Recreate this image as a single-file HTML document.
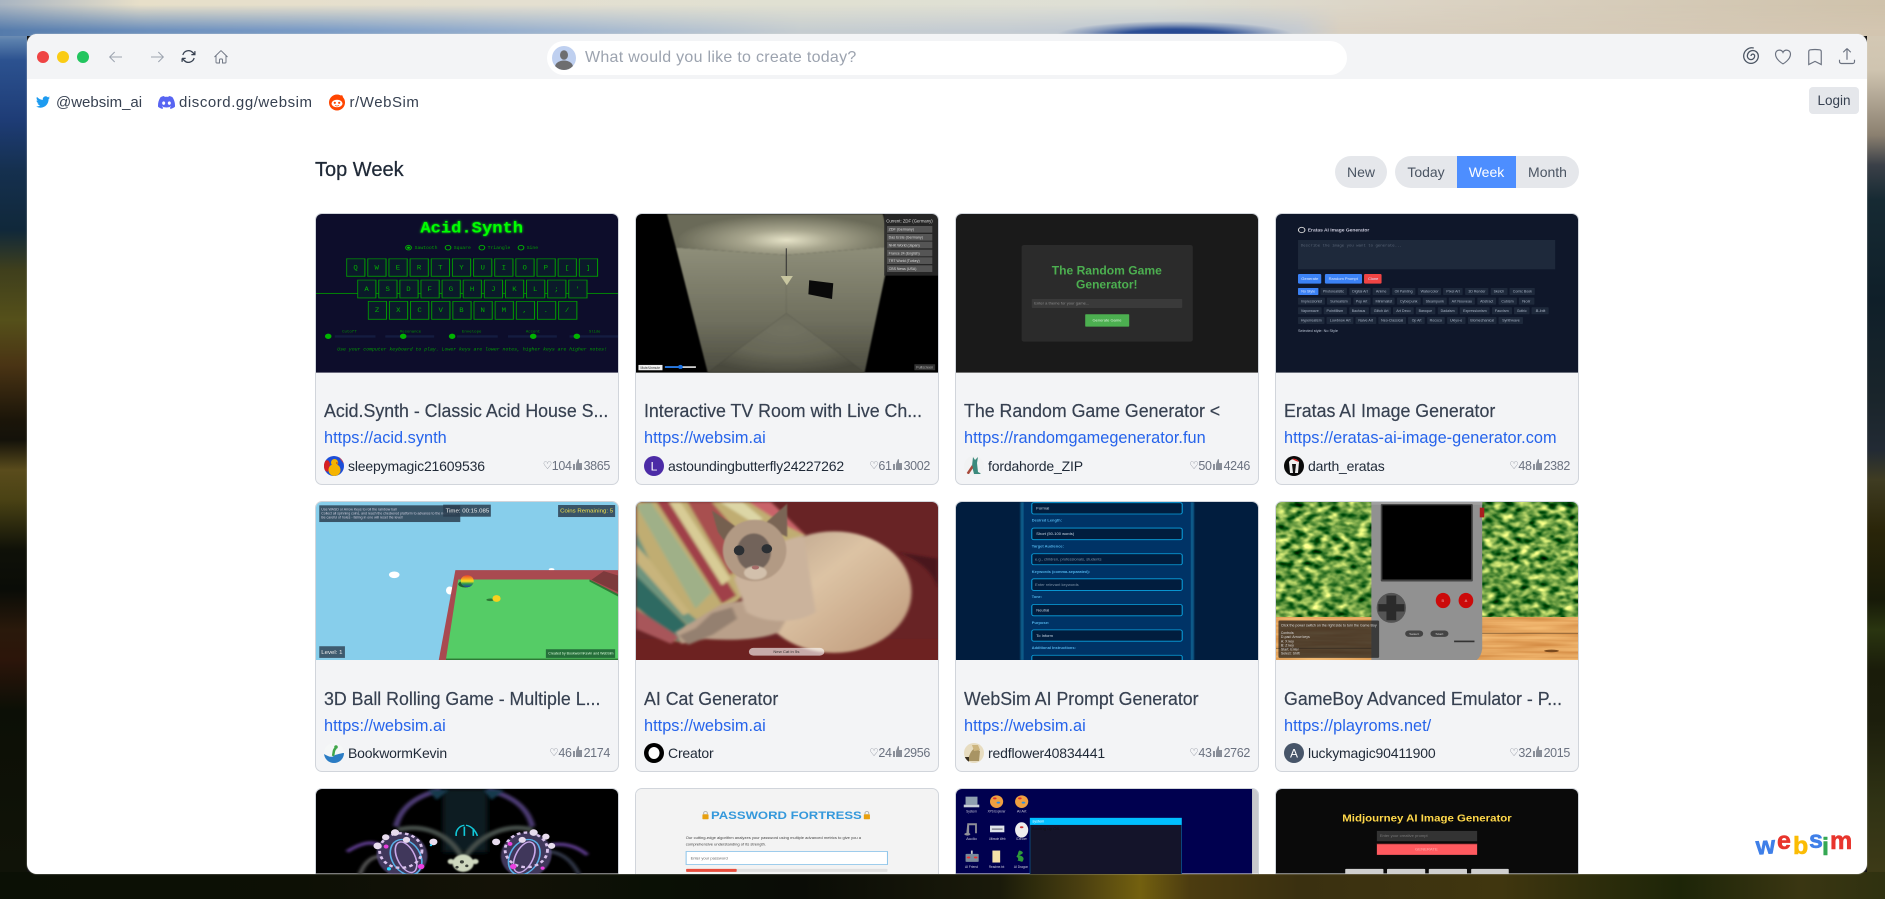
<!DOCTYPE html>
<html lang="en"><head><meta charset="utf-8"><title>websim</title>
<style>
html,body{margin:0;padding:0;width:1885px;height:899px;overflow:hidden;background:#111;font-family:"Liberation Sans",sans-serif}
.bg{position:absolute}
#bgL{left:0;top:0;width:27px;height:899px;background:linear-gradient(180deg,#cfcdc4 0,#9db0c4 25px,#5b80ad 40px,#2c5290 60px,#1e3c76 120px,#15304f 170px,#10283a 230px,#3f3f1c 270px,#55501a 320px,#4a3414 365px,#1b1509 420px,#14120a 440px,#5a4c1c 470px,#4a4214 500px,#0f1108 550px,#0a0c07 590px,#2a190b 630px,#2c150a 660px,#0c0f06 710px,#111408 899px)}
#bgR{left:1867px;top:0;width:18px;height:899px;background:linear-gradient(180deg,#d8ccb8 0,#cfc4b0 70px,#8b8070 135px,#3b4048 165px,#162a33 200px,#0f1f29 300px,#1a252b 400px,#222a34 450px,#3f3c22 480px,#2a2509 530px,#171a08 600px,#2a3510 630px,#1a1c0a 670px,#1c1e0c 720px,#2f3214 800px,#3d3a17 870px,#2a2a0d 899px)}
#bgT{left:0;top:0;width:1885px;height:36px;background:linear-gradient(90deg,#a9b5c2 0,#e7dfc9 140px,#e4dfd0 500px,#e0e0d2 800px,#dedfd5 1150px,#dcd4c5 1400px,#cfc2ab 1885px)}
#bgT2{left:0;top:0;width:1885px;height:36px;background:linear-gradient(90deg,#557bab 0,#6d90bd 150px,#7b9cc6 320px,#9eb4cf 550px,#c5ccd0 800px,#c4cbd2 1000px,#b9c4d2 1240px,#c5cad0 1300px,#d8cfc0 1340px,#d3c5b0 1885px);-webkit-mask-image:linear-gradient(180deg,transparent 5px,#000 30px);mask-image:linear-gradient(180deg,transparent 5px,#000 30px)}
#bgT3{left:1040px;top:18px;width:270px;height:18px;background:radial-gradient(ellipse 120px 15px at 50% 100%,#1f3f8f 0,#2d4f95 45%,rgba(70,100,160,.45) 75%,rgba(120,140,180,0) 100%)}
#bgB{left:0;top:872px;width:1885px;height:27px;background:linear-gradient(90deg,#0b1005 0,#0d1005 300px,#141207 500px,#0a1005 650px,#0a0c06 800px,#1a1a0a 1000px,#2c2a0c 1030px,#4a3f10 1080px,#73600f 1140px,#4c3c10 1190px,#3a3010 1300px,#40360f 1500px,#1d2508 1680px,#3a3612 1800px,#2f3110 1885px)}
#win{position:absolute;left:27px;top:34px;width:1840px;height:840px;background:#fff;border-radius:10px;overflow:hidden;box-shadow:0 0 1.5px rgba(225,225,215,.8)}
#bar{position:absolute;left:0;top:0;width:100%;height:45px;background:#f3f4f6}
.dot{position:absolute;top:17px;width:12px;height:12px;border-radius:50%}
.ic{position:absolute;fill:none}
#search{position:absolute;left:520px;top:7px;width:800px;height:34px;border-radius:17px;background:#fff}
#search span{position:absolute;left:38px;top:7px;font-size:16px;line-height:20px;color:#9ca3af;letter-spacing:.28px;white-space:nowrap}
.lnk{position:absolute;top:60px;font-size:15px;line-height:18px;color:#374151;white-space:nowrap}
#login{position:absolute;left:1782px;top:53px;width:50px;height:27px;background:#e5e7eb;border-radius:4px;text-align:center;font-size:13.5px;line-height:27px;color:#374151}
h1{position:absolute;margin:0;left:288px;top:124px;font-size:20px;line-height:24px;font-weight:500;color:#1f2937;white-space:nowrap;-webkit-text-stroke:.25px #1f2937}
.tab{position:absolute;top:122px;height:32px;line-height:32px;text-align:center;font-size:14px;color:#4b5563;background:#e5e7eb}
#grid{position:absolute;left:288px;top:179.3px;height:660.7px;overflow:hidden;display:grid;grid-template-columns:repeat(4,304px);column-gap:16px;row-gap:16px}
.card{position:relative;width:302px;height:269.6px;background:#f3f4f6;border:1px solid #d1d5db;border-radius:7px;overflow:hidden}
.card.r3{height:84.5px;border-bottom:0;border-radius:7px 7px 0 0}
.t{display:block;width:302px;height:158.6px;filter:blur(.25px)}
.r3 .t{height:84.5px}
.ti{position:absolute;left:8px;top:185px;font-size:18.5px;line-height:24px;color:#374151;white-space:nowrap;-webkit-text-stroke:.2px #374151;transform:scaleX(.96);transform-origin:0 50%}
.u{position:absolute;left:8px;top:214px;font-size:16.3px;line-height:20px;color:#2563eb;white-space:nowrap;letter-spacing:.03px}
.av{position:absolute;left:8px;top:241.5px;width:20px;height:20px;border-radius:50%;overflow:hidden}
.n{position:absolute;left:32px;top:241.5px;font-size:14px;line-height:20px;color:#1f2937;white-space:nowrap;letter-spacing:-.17px}
.s{position:absolute;right:8px;top:241.5px;height:20px;display:flex;align-items:center;font-size:12.5px;color:#6b7280;letter-spacing:-.35px;white-space:nowrap}
.s i{font-style:normal;font-family:"DejaVu Sans",sans-serif;font-size:10.5px}
.s svg{margin:-3px 2px 0 1px}
svg text{font-family:"Liberation Sans",sans-serif}
svg .m{font-family:"Liberation Mono",monospace}
#logo{position:absolute;left:1728px;top:795px;width:98px;height:32px}
</style></head><body>
<div class="bg" id="bgL"></div><div class="bg" id="bgR"></div><div class="bg" id="bgT"></div><div class="bg" id="bgT2"></div><div class="bg" id="bgT3"></div><div class="bg" id="bgB"></div>
<svg width="0" height="0" style="position:absolute"><defs>
<filter id="b2" x="-20%" y="-20%" width="140%" height="140%"><feGaussianBlur stdDeviation="2"/></filter>
<filter id="b4" x="-30%" y="-30%" width="160%" height="160%"><feGaussianBlur stdDeviation="4"/></filter>
<filter id="b7" x="-5%" y="-5%" width="110%" height="110%"><feGaussianBlur stdDeviation="7"/></filter>
<filter id="glow" x="-30%" y="-50%" width="160%" height="200%"><feGaussianBlur stdDeviation="3" result="g"/><feMerge><feMergeNode in="g"/><feMergeNode in="SourceGraphic"/></feMerge></filter>
<filter id="leaf" x="0" y="0" width="100%" height="100%" color-interpolation-filters="sRGB"><feTurbulence type="fractalNoise" baseFrequency="0.045 0.055" numOctaves="3" seed="7"/><feGaussianBlur stdDeviation="2.5"/><feColorMatrix values="2.2 0 0 0 -.7  1.6 0 0 0 -.2  1.1 0 0 0 -.3  0 0 0 0 1"/></filter>
<filter id="wood" x="0" y="0" width="100%" height="100%" color-interpolation-filters="sRGB"><feTurbulence type="fractalNoise" baseFrequency="0.006 0.09" numOctaves="2" seed="3"/><feColorMatrix values=".2 0 0 0 .8  .3 0 0 0 .5  .3 0 0 0 .22  0 0 0 0 1"/></filter>
<radialGradient id="ceil" gradientUnits="userSpaceOnUse" cx="1168" cy="105" r="270" gradientTransform="matrix(1 0 0 .28 0 76)"><stop offset="0" stop-color="#e6e3c8"/><stop offset=".4" stop-color="#a8a68e"/><stop offset="1" stop-color="#6a6a58"/></radialGradient>
<linearGradient id="wl" x1="0" x2="0" y1="0" y2="1"><stop offset="0" stop-color="#8e8e79"/><stop offset=".6" stop-color="#6e6e5d"/><stop offset="1" stop-color="#4c4c40"/></linearGradient>
<radialGradient id="fl" cx=".5" cy=".25" r=".75"><stop offset="0" stop-color="#727261"/><stop offset=".6" stop-color="#666656"/><stop offset="1" stop-color="#4a4a3e"/></radialGradient>
<linearGradient id="cat" x1="0" x2="1" y1="0" y2="1"><stop offset="0" stop-color="#b8a08a"/><stop offset=".4" stop-color="#dcc3a4"/><stop offset="1" stop-color="#bd9778"/></linearGradient>
<linearGradient id="rb" x1="0" x2="0" y1="0" y2="1"><stop offset="0" stop-color="#e84030"/><stop offset=".3" stop-color="#f5a020"/><stop offset=".5" stop-color="#f7e020"/><stop offset=".72" stop-color="#2c9a50"/><stop offset="1" stop-color="#2040a0"/></linearGradient>
</defs></svg>
<div id="win">
<div id="bar">
<span class="dot" style="left:10px;background:#ef4444"></span><span class="dot" style="left:30px;background:#facc15"></span><span class="dot" style="left:50px;background:#22c55e"></span>
<svg class="ic" style="left:81px;top:15px" width="16" height="16" viewBox="0 0 24 24" stroke="#9ca3af" stroke-width="1.5"><path d="M21 12H3m7-7.5L2.5 12l7.5 7.5"/></svg>
<svg class="ic" style="left:122px;top:15px" width="16" height="16" viewBox="0 0 24 24" stroke="#9ca3af" stroke-width="1.5"><path d="M3 12h18m-7-7.5l7.500 7.500-7.500 7.500"/></svg>
<svg class="ic" style="left:153px;top:14px" width="17" height="17" viewBox="0 0 24 24" stroke="#374151" stroke-width="1.8"><path d="M16.023 9.348h4.992v-.001M2.985 19.644v-4.992m0 0h4.992m-4.993 0l3.181 3.183a8.250 8.250 0 0013.803-3.700M4.031 9.865a8.250 8.250 0 0113.803-3.700l3.181 3.182m0-4.991v4.990"/></svg>
<svg class="ic" style="left:186px;top:15px" width="16" height="16" viewBox="0 0 24 24" stroke="#6b7280" stroke-width="1.4"><path d="M2.250 12l8.954-8.955c.440-.439 1.152-.439 1.591 0L21.750 12M4.500 9.750v10.125c0 .621.504 1.125 1.125 1.125H9.750v-4.875c0-.621.504-1.125 1.125-1.125h2.250c.621 0 1.125.504 1.125 1.125V21h4.125c.621 0 1.125-.504 1.125-1.125V9.750"/></svg>
<div id="search">
<svg class="ic" style="left:5px;top:5px" width="24" height="24" viewBox="0 0 24 24"><defs><clipPath id="ac"><circle cx="12" cy="12" r="12"/></clipPath></defs><circle cx="12" cy="12" r="12" fill="#bfd0f0"/><g clip-path="url(#ac)" fill="#6e6e70"><ellipse cx="12" cy="9" rx="4" ry="4.800"/><ellipse cx="12" cy="21" rx="9" ry="6.500"/></g></svg>
<span>What would you like to create today?</span></div>
<svg class="ic" style="left:1713px;top:11px" width="22" height="22" viewBox="0 0 24 24" stroke="#4b5563" stroke-width="1.400"><path d="M12 12a2 2 0 0 1 4 0a4 4 0 0 1-8 0a6 6 0 0 1 12 0a8 8 0 0 1-16 0a9 9 0 0 1 11-8.700"/></svg>
<svg class="ic" style="left:1746px;top:13px" width="20" height="20" viewBox="0 0 24 24" stroke="#6b7280" stroke-width="1.400"><path d="M21 8.250c0-2.485-2.099-4.500-4.688-4.500-1.935 0-3.597 1.126-4.312 2.733-.715-1.607-2.377-2.733-4.313-2.733C5.100 3.750 3 5.765 3 8.250c0 7.220 9 12 9 12s9-4.780 9-12z"/></svg>
<svg class="ic" style="left:1778px;top:13px" width="20" height="20" viewBox="0 0 24 24" stroke="#6b7280" stroke-width="1.400"><path d="M17.593 3.322c1.100.128 1.907 1.077 1.907 2.185V21L12 17.250 4.500 21V5.507c0-1.108.806-2.057 1.907-2.185a48.507 48.507 0 0111.186 0z"/></svg>
<svg class="ic" style="left:1810px;top:12px" width="20" height="20" viewBox="0 0 24 24" stroke="#6b7280" stroke-width="1.400"><path d="M3 16.500v2.250A2.250 2.250 0 005.250 21h13.500A2.250 2.250 0 0021 18.750V16.500m-13.500-9L12 3m0 0l4.500 4.500M12 3v13.500"/></svg>
</div>
<svg class="ic" style="left:9px;top:61px" width="14" height="14" viewBox="0 0 24 24"><path fill="#1d9bf0" d="M23.953 4.570a10 10 0 01-2.825.775 4.958 4.958 0 002.163-2.723c-.951.555-2.005.959-3.127 1.184a4.920 4.920 0 00-8.384 4.482C7.690 8.095 4.067 6.130 1.640 3.162a4.822 4.822 0 00-.666 2.475c0 1.710.870 3.213 2.188 4.096a4.904 4.904 0 01-2.228-.616v.060a4.923 4.923 0 003.946 4.827 4.996 4.996 0 01-2.212.085 4.936 4.936 0 004.604 3.417 9.867 9.867 0 01-6.102 2.105c-.390 0-.779-.023-1.170-.067a13.995 13.995 0 007.557 2.209c9.053 0 13.998-7.496 13.998-13.985 0-.210 0-.420-.015-.630A9.935 9.935 0 0024 4.590z"/></svg>
<span class="lnk" style="left:29px">@websim_ai</span>
<svg class="ic" style="left:131px;top:60px" width="17" height="17" viewBox="0 0 24 24"><path fill="#5865f2" d="M20.317 4.370a19.791 19.791 0 0 0-4.885-1.515.074.074 0 0 0-.079.037c-.210.375-.444.864-.608 1.250a18.270 18.270 0 0 0-5.487 0 12.640 12.640 0 0 0-.617-1.250.077.077 0 0 0-.079-.037A19.736 19.736 0 0 0 3.677 4.370a.070.070 0 0 0-.032.027C.533 9.046-.320 13.580.099 18.057a.082.082 0 0 0 .031.057 19.900 19.900 0 0 0 5.993 3.030.078.078 0 0 0 .084-.028 14.090 14.090 0 0 0 1.226-1.994.076.076 0 0 0-.041-.106 13.107 13.107 0 0 1-1.872-.892.077.077 0 0 1-.008-.128 10.200 10.200 0 0 0 .372-.292.074.074 0 0 1 .077-.010c3.928 1.793 8.180 1.793 12.062 0a.074.074 0 0 1 .078.010c.120.098.246.198.373.292a.077.077 0 0 1-.006.127 12.299 12.299 0 0 1-1.873.892.077.077 0 0 0-.041.107c.360.698.772 1.362 1.225 1.993a.076.076 0 0 0 .084.028 19.839 19.839 0 0 0 6.002-3.030.077.077 0 0 0 .032-.054c.500-5.177-.838-9.674-3.549-13.660a.061.061 0 0 0-.031-.030zM8.020 15.330c-1.183 0-2.157-1.085-2.157-2.419 0-1.333.956-2.419 2.157-2.419 1.210 0 2.176 1.096 2.157 2.420 0 1.333-.956 2.418-2.157 2.418zm7.975 0c-1.183 0-2.157-1.085-2.157-2.419 0-1.333.955-2.419 2.157-2.419 1.210 0 2.176 1.096 2.157 2.420 0 1.333-.946 2.418-2.157 2.418z"/></svg>
<span class="lnk" style="left:152px;letter-spacing:.55px">discord.gg/websim</span>
<svg class="ic" style="left:302px;top:60px" width="16" height="17" viewBox="0 0 16 17"><circle cx="8" cy="8.500" r="8" fill="#ff4500"/><circle cx="12.500" cy="2.500" r="1.300" fill="#ff4500"/><ellipse cx="8" cy="9.500" rx="5.500" ry="3.800" fill="#fff"/><circle cx="5.800" cy="8.800" r="1.100" fill="#ff4500"/><circle cx="10.200" cy="8.800" r="1.100" fill="#ff4500"/><path d="M6 11.300c1.200.8 2.800.8 4 0" stroke="#ff4500" stroke-width=".7" fill="none"/></svg>
<span class="lnk" style="left:322.500px;letter-spacing:.55px">r/WebSim</span>
<div id="login">Login</div>
<h1>Top Week</h1>
<div class="tab" style="left:1308px;width:52px;border-radius:16px">New</div>
<div class="tab" style="left:1368px;width:62px;border-radius:16px 0 0 16px">Today</div>
<div class="tab" style="left:1430px;width:59px;background:#4d8eff;color:#fff">Week</div>
<div class="tab" style="left:1489px;width:63px;border-radius:0 16px 16px 0">Month</div>

<div id="grid">
<!-- 1 -->
<div class="card">
<svg class="t" viewBox="14 27 741 476" preserveAspectRatio="none"><rect x="14" y="27" width="741" height="476" fill="#0d0d2b"/>
<text class="m" x="270" y="83" font-size="48" font-weight="700" fill="#00ff00" textLength="252" lengthAdjust="spacingAndGlyphs" filter="url(#glow)">Acid.Synth</text>
<g fill="none" stroke="#00b400" stroke-width="2.500"><circle cx="241" cy="128" r="7"/><circle cx="338" cy="128" r="7"/><circle cx="421" cy="128" r="7"/><circle cx="517" cy="128" r="7"/></g><circle cx="241" cy="128" r="3.500" fill="#00c800"/>
<g class="m" fill="#00a000" font-size="14"><text class="m" x="256" y="132" textLength="56" lengthAdjust="spacingAndGlyphs">Sawtooth</text><text class="m" x="352" y="132" textLength="42" lengthAdjust="spacingAndGlyphs">Square</text><text class="m" x="435" y="132" textLength="56" lengthAdjust="spacingAndGlyphs">Triangle</text><text class="m" x="531" y="132" textLength="28" lengthAdjust="spacingAndGlyphs">Sine</text></g>
<rect x="14" y="264" width="741" height="2.500" fill="#009a00"/>
<defs><pattern id="kp" patternUnits="userSpaceOnUse" width="51.900" height="60" x="88" y="160"><rect x="1" y="1" width="45" height="53" fill="#0b1a2a" stroke="#00a000" stroke-width="2.500"/></pattern><pattern id="kp2" patternUnits="userSpaceOnUse" width="51.800" height="60" x="115" y="224"><rect x="1" y="1" width="45" height="54" fill="#0b1a2a" stroke="#00a000" stroke-width="2.500"/></pattern><pattern id="kp3" patternUnits="userSpaceOnUse" width="51.900" height="60" x="141" y="288"><rect x="1" y="1" width="45" height="54" fill="#0b1a2a" stroke="#00a000" stroke-width="2.500"/></pattern></defs>
<rect x="88" y="160" width="620" height="56" fill="url(#kp)"/><rect x="115" y="224" width="566" height="57" fill="url(#kp2)"/><rect x="141" y="288" width="515" height="57" fill="url(#kp3)"/>
<g fill="#00b000" font-size="18" text-anchor="middle"><text class="m" y="194" x="111 163 215 267 319 371 423 475 526 578 630 682">QWERTYUIOP[]</text><text class="m" y="258" x="138 190 241 293 345 397 449 501 552 604 656">ASDFGHJKL;'</text><text class="m" y="321" x="164 216 268 320 371 423 475 526 578 630">ZXCVBNM,./</text></g>
<g fill="#141c40"><rect x="60" y="391" width="100" height="7"/><rect x="184" y="391" width="120" height="7"/><rect x="360" y="391" width="100" height="7"/><rect x="485" y="391" width="120" height="7"/><rect x="636" y="391" width="119" height="7"/></g>
<g fill="#00b400"><circle cx="44" cy="394" r="8"/><circle cx="228" cy="394" r="8"/><circle cx="348" cy="394" r="8"/><circle cx="547" cy="394" r="8"/><circle cx="654" cy="394" r="8"/></g>
<g fill="#009000" font-size="12"><text class="m" x="78" y="383" textLength="36" lengthAdjust="spacingAndGlyphs">Cutoff</text><text class="m" x="220" y="383" textLength="52" lengthAdjust="spacingAndGlyphs">Resonance</text><text class="m" x="372" y="383" textLength="48" lengthAdjust="spacingAndGlyphs">Envelope</text><text class="m" x="529" y="383" textLength="35" lengthAdjust="spacingAndGlyphs">Accent</text><text class="m" x="684" y="383" textLength="28" lengthAdjust="spacingAndGlyphs">Slide</text></g>
<text class="m" x="66" y="437" font-size="14" font-style="italic" fill="#00a000" textLength="662" lengthAdjust="spacingAndGlyphs">Use your computer keyboard to play. Lower keys are lower notes, higher keys are higher notes!</text></svg>
<div class="ti">Acid.Synth - Classic Acid House S...</div><div class="u">https://acid.synth</div>
<svg class="av" viewBox="0 0 20 20"><rect width="20" height="20" fill="#1d4ed8"/><path d="M0 6c3-3 5-2 6 2l-2 8-4-2z" fill="#d92020"/><path d="M14 0h6v8z" fill="#e04040"/><ellipse cx="10.500" cy="14" rx="6" ry="6" fill="#f5b400"/><circle cx="10.500" cy="6.500" r="3.500" fill="#f5b400"/><path d="M12 6l3 1-3 1z" fill="#d96000"/></svg>
<div class="n">sleepymagic21609536</div><div class="s"><i>♡</i>104<svg width="9" height="11" viewBox="0 0 9 11"><path fill="#8a8f99" d="M0 5h2v6H0zM3 5l2-5 1 .5V4h3v7H3z"/></svg>3865</div>
</div>
<!-- 2 -->
<div class="card">
<svg class="t" viewBox="799 27 741 476" preserveAspectRatio="none"><rect x="799" y="27" width="741" height="476" fill="#000"/>
<g filter="url(#b2)"><polygon points="875,27 1405,27 1425,125 1168,150 897,128" fill="url(#ceil)"/>
<polygon points="897,128 1168,150 1168,325 975,503" fill="url(#wl)"/><polygon points="1425,125 1168,150 1168,325 1360,503" fill="url(#wl)"/>
<polygon points="975,503 1168,325 1360,503" fill="url(#fl)"/></g>
<rect x="1166.500" y="130" width="2.500" height="85" fill="#333"/><polygon points="1154,213 1184,213 1169,241" fill="#c8c6a0"/>
<polygon points="1224,226 1283,235 1280,282 1222,268" fill="#0a0a0a"/>
<rect x="1408" y="27" width="132" height="185" fill="#2a2a2a" fill-opacity=".9"/>
<text x="1413" y="53" font-size="14" fill="#ddd" textLength="114" lengthAdjust="spacingAndGlyphs">Current: ZDF (Germany)</text>
<g fill="#555"><rect x="1415" y="63" width="111" height="20"/><rect x="1415" y="87" width="111" height="20"/><rect x="1415" y="110" width="111" height="20"/><rect x="1415" y="134" width="111" height="20"/><rect x="1415" y="157" width="111" height="20"/><rect x="1415" y="181" width="111" height="20"/></g>
<g fill="#ddd" font-size="12"><text x="1419" y="77" textLength="62" lengthAdjust="spacingAndGlyphs">ZDF (Germany)</text><text x="1419" y="101" textLength="84" lengthAdjust="spacingAndGlyphs">Das Erste (Germany)</text><text x="1419" y="124" textLength="76" lengthAdjust="spacingAndGlyphs">NHK World (Japan)</text><text x="1419" y="148" textLength="76" lengthAdjust="spacingAndGlyphs">France 24 (English)</text><text x="1419" y="171" textLength="76" lengthAdjust="spacingAndGlyphs">TRT World (Turkey)</text><text x="1419" y="195" textLength="68" lengthAdjust="spacingAndGlyphs">CBS News (USA)</text></g>
<rect x="805" y="480" width="59" height="16" fill="#eee"/><text x="810" y="492" font-size="11" fill="#333" textLength="48" lengthAdjust="spacingAndGlyphs">Mute/Unmute</text>
<rect x="870" y="484" width="76" height="5" fill="#ddd"/><rect x="870" y="484" width="38" height="5" fill="#1a73e8"/><circle cx="908" cy="486" r="6" fill="#1a73e8"/>
<rect x="1482" y="478" width="51" height="18" fill="#333"/><text x="1487" y="491" font-size="11" fill="#bbb" textLength="41" lengthAdjust="spacingAndGlyphs">Fullscreen</text></svg>
<div class="ti">Interactive TV Room with Live Ch...</div><div class="u">https://websim.ai</div>
<svg class="av" viewBox="0 0 20 20"><rect width="20" height="20" fill="#4c2ba6"/><text x="10" y="14.500" font-size="12" fill="#fff" text-anchor="middle">L</text></svg>
<div class="n">astoundingbutterfly24227262</div><div class="s"><i>♡</i>61<svg width="9" height="11" viewBox="0 0 9 11"><path fill="#8a8f99" d="M0 5h2v6H0zM3 5l2-5 1 .5V4h3v7H3z"/></svg>3002</div>
</div>
<!-- 3 -->
<div class="card">
<svg class="t" viewBox="14 27 741 476" preserveAspectRatio="none"><rect x="14" y="27" width="741" height="476" fill="#1a1a1a"/>
<rect x="175" y="120" width="420" height="290" rx="6" fill="#2b2b2b"/>
<g fill="#4caf50" font-size="36" font-weight="700" text-anchor="middle"><text x="384" y="208" textLength="270" lengthAdjust="spacingAndGlyphs">The Random Game</text><text x="384" y="250" textLength="151" lengthAdjust="spacingAndGlyphs">Generator!</text></g>
<rect x="200" y="282" width="369" height="27" rx="2" fill="#3a3a3a"/><text x="206" y="299" font-size="12" fill="#8a8a8a" textLength="135" lengthAdjust="spacingAndGlyphs">Enter a theme for your game...</text>
<rect x="331" y="328" width="108" height="37" rx="2" fill="#4caf50"/><text x="349" y="350" font-size="12" fill="#d8f0d8" textLength="71" lengthAdjust="spacingAndGlyphs">Generate Game</text></svg>
<div class="ti">The Random Game Generator &lt;</div><div class="u">https://randomgamegenerator.fun</div>
<svg class="av" viewBox="0 0 20 20"><rect width="20" height="20" fill="#f1f2f3"/><path d="M9 1l2 3 3-3-1 6 1 9 4 2-8 0-2-8z" fill="#3b8a7d"/><path d="M8 9L2 18h3l4-6z" fill="#a84a3c"/></svg>
<div class="n">fordahorde_ZIP</div><div class="s"><i>♡</i>50<svg width="9" height="11" viewBox="0 0 9 11"><path fill="#8a8f99" d="M0 5h2v6H0zM3 5l2-5 1 .5V4h3v7H3z"/></svg>4246</div>
</div>
<!-- 4 -->
<div class="card">
<svg class="t" viewBox="799 27 741 476" preserveAspectRatio="none"><rect x="799" y="27" width="741" height="476" fill="#0f172a"/>
<circle cx="862" cy="75" r="8" fill="none" stroke="#ddd" stroke-width="2.500"/><text x="877" y="80" font-size="14" font-weight="700" fill="#ccd" textLength="151" lengthAdjust="spacingAndGlyphs">Eratas AI Image Generator</text>
<rect x="853" y="105" width="631" height="88" fill="#1e293b"/><text class="m" x="860" y="124" font-size="12" fill="#5a6678" textLength="248" lengthAdjust="spacingAndGlyphs">Describe the image you want to generate...</text>
<rect x="853" y="207" width="57" height="29" rx="3" fill="#3b82f6"/><rect x="919" y="207" width="91" height="29" rx="3" fill="#3b82f6"/><rect x="1015" y="207" width="43" height="29" rx="3" fill="#ef4444"/>
<g fill="#dbe7ff" font-size="12"><text x="861" y="225" textLength="42" lengthAdjust="spacingAndGlyphs">Generate</text><text x="928" y="225" textLength="72" lengthAdjust="spacingAndGlyphs">Random Prompt</text><text x="1025" y="225" textLength="25" lengthAdjust="spacingAndGlyphs">Clone</text></g>
<g fill="#1e293b"><rect x="853" y="249" width="50" height="21" rx="2" fill="#3b82f6"/><rect x="908" y="249" width="65" height="21" rx="2"/><rect x="979" y="249" width="52" height="21" rx="2"/><rect x="1036" y="249" width="42" height="21" rx="2"/><rect x="1084" y="249" width="57" height="21" rx="2"/><rect x="1147" y="249" width="57" height="21" rx="2"/><rect x="1209" y="249" width="48" height="21" rx="2"/><rect x="1263" y="249" width="57" height="21" rx="2"/><rect x="1326" y="249" width="41" height="21" rx="2"/><rect x="1372" y="249" width="62" height="21" rx="2"/>
<rect x="853" y="278" width="66" height="21" rx="2"/><rect x="924" y="278" width="59" height="21" rx="2"/><rect x="989" y="278" width="42" height="21" rx="2"/><rect x="1036" y="278" width="54" height="21" rx="2"/><rect x="1096" y="278" width="58" height="21" rx="2"/><rect x="1159" y="278" width="59" height="21" rx="2"/><rect x="1223" y="278" width="64" height="21" rx="2"/><rect x="1293" y="278" width="46" height="21" rx="2"/><rect x="1345" y="278" width="45" height="21" rx="2"/><rect x="1395" y="278" width="38" height="21" rx="2"/>
<rect x="853" y="307" width="58" height="21" rx="2"/><rect x="916" y="307" width="57" height="21" rx="2"/><rect x="979" y="307" width="48" height="21" rx="2"/><rect x="1031" y="307" width="50" height="21" rx="2"/><rect x="1086" y="307" width="51" height="21" rx="2"/><rect x="1142" y="307" width="48" height="21" rx="2"/><rect x="1196" y="307" width="49" height="21" rx="2"/><rect x="1250" y="307" width="73" height="21" rx="2"/><rect x="1329" y="307" width="49" height="21" rx="2"/><rect x="1383" y="307" width="38" height="21" rx="2"/><rect x="1426" y="307" width="42" height="21" rx="2"/>
<rect x="853" y="336" width="65" height="21" rx="2"/><rect x="923" y="336" width="66" height="21" rx="2"/><rect x="994" y="336" width="51" height="21" rx="2"/><rect x="1050" y="336" width="68" height="21" rx="2"/><rect x="1123" y="336" width="41" height="21" rx="2"/><rect x="1170" y="336" width="43" height="21" rx="2"/><rect x="1219" y="336" width="45" height="21" rx="2"/><rect x="1270" y="336" width="70" height="21" rx="2"/><rect x="1345" y="336" width="60" height="21" rx="2"/></g>
<g fill="#a9b4c6" font-size="11"><text x="861" y="263" fill="#e0eaff" textLength="34" lengthAdjust="spacingAndGlyphs">No Style</text><text x="914" y="263" textLength="52" lengthAdjust="spacingAndGlyphs">Photorealistic</text><text x="986" y="263" textLength="38" lengthAdjust="spacingAndGlyphs">Digital Art</text><text x="1044" y="263" textLength="26" lengthAdjust="spacingAndGlyphs">Anime</text><text x="1090" y="263" textLength="44" lengthAdjust="spacingAndGlyphs">Oil Painting</text><text x="1154" y="263" textLength="44" lengthAdjust="spacingAndGlyphs">Watercolor</text><text x="1217" y="263" textLength="33" lengthAdjust="spacingAndGlyphs">Pixel Art</text><text x="1271" y="263" textLength="42" lengthAdjust="spacingAndGlyphs">3D Render</text><text x="1333" y="263" textLength="26" lengthAdjust="spacingAndGlyphs">Sketch</text><text x="1380" y="263" textLength="47" lengthAdjust="spacingAndGlyphs">Comic Book</text>
<text x="860" y="292" textLength="52" lengthAdjust="spacingAndGlyphs">Impressionist</text><text x="932" y="292" textLength="43" lengthAdjust="spacingAndGlyphs">Surrealism</text><text x="995" y="292" textLength="28" lengthAdjust="spacingAndGlyphs">Pop Art</text><text x="1043" y="292" textLength="41" lengthAdjust="spacingAndGlyphs">Minimalist</text><text x="1103" y="292" textLength="43" lengthAdjust="spacingAndGlyphs">Cyberpunk</text><text x="1166" y="292" textLength="45" lengthAdjust="spacingAndGlyphs">Steampunk</text><text x="1230" y="292" textLength="50" lengthAdjust="spacingAndGlyphs">Art Nouveau</text><text x="1300" y="292" textLength="32" lengthAdjust="spacingAndGlyphs">Abstract</text><text x="1352" y="292" textLength="30" lengthAdjust="spacingAndGlyphs">Cubism</text><text x="1403" y="292" textLength="20" lengthAdjust="spacingAndGlyphs">Noir</text>
<text x="860" y="321" textLength="44" lengthAdjust="spacingAndGlyphs">Vaporwave</text><text x="923" y="321" textLength="41" lengthAdjust="spacingAndGlyphs">Pointillism</text><text x="985" y="321" textLength="33" lengthAdjust="spacingAndGlyphs">Bauhaus</text><text x="1039" y="321" textLength="36" lengthAdjust="spacingAndGlyphs">Glitch Art</text><text x="1094" y="321" textLength="35" lengthAdjust="spacingAndGlyphs">Art Deco</text><text x="1149" y="321" textLength="33" lengthAdjust="spacingAndGlyphs">Baroque</text><text x="1203" y="321" textLength="34" lengthAdjust="spacingAndGlyphs">Dadaism</text><text x="1258" y="321" textLength="58" lengthAdjust="spacingAndGlyphs">Expressionism</text><text x="1336" y="321" textLength="34" lengthAdjust="spacingAndGlyphs">Fauvism</text><text x="1390" y="321" textLength="24" lengthAdjust="spacingAndGlyphs">Gothic</text><text x="1436" y="321" textLength="24" lengthAdjust="spacingAndGlyphs">8-bit</text>
<text x="860" y="350" textLength="51" lengthAdjust="spacingAndGlyphs">Hyperrealism</text><text x="931" y="350" textLength="51" lengthAdjust="spacingAndGlyphs">Lowbrow Art</text><text x="1001" y="350" textLength="36" lengthAdjust="spacingAndGlyphs">Naive Art</text><text x="1057" y="350" textLength="54" lengthAdjust="spacingAndGlyphs">Neo-Classical</text><text x="1132" y="350" textLength="24" lengthAdjust="spacingAndGlyphs">Op Art</text><text x="1176" y="350" textLength="30" lengthAdjust="spacingAndGlyphs">Rococo</text><text x="1226" y="350" textLength="30" lengthAdjust="spacingAndGlyphs">Ukiyo-e</text><text x="1276" y="350" textLength="58" lengthAdjust="spacingAndGlyphs">Biomechanical</text><text x="1354" y="350" textLength="43" lengthAdjust="spacingAndGlyphs">Synthwave</text></g>
<text x="853" y="381" font-size="12" fill="#b8c2d2" textLength="98" lengthAdjust="spacingAndGlyphs">Selected style: No Style</text></svg>
<div class="ti">Eratas AI Image Generator</div><div class="u">https://eratas-ai-image-generator.com</div>
<svg class="av" viewBox="0 0 20 20"><rect width="20" height="20" fill="#0a0a0a"/><path d="M5 6c2-4 8-4 10 0l-1 11H6z" fill="#f0f0f0"/><path d="M8 3c2-1 5 0 7 3l-3-1z" fill="#d02020"/><path d="M8 8h4l-1 9H9z" fill="#111"/></svg>
<div class="n">darth_eratas</div><div class="s"><i>♡</i>48<svg width="9" height="11" viewBox="0 0 9 11"><path fill="#8a8f99" d="M0 5h2v6H0zM3 5l2-5 1 .5V4h3v7H3z"/></svg>2382</div>
</div>
<!-- 5 -->
<div class="card">
<svg class="t" viewBox="14 20 741 475" preserveAspectRatio="none"><rect x="14" y="20" width="741" height="475" fill="#87ceeb"/>
<ellipse cx="206" cy="238" rx="13" ry="10" fill="#fff"/><ellipse cx="342" cy="285" rx="9" ry="12" fill="#fff"/><ellipse cx="592" cy="222" rx="7" ry="4" fill="#fff"/>
<polygon points="356,224 755,224 755,495 315,495" fill="#a94a50"/>
<polygon points="363,252 685,252 755,298 755,490 333,490" fill="#55cc66"/>
<rect x="333" y="489" width="422" height="6" fill="#2c7a35"/>
<polygon points="690,253 720,227 755,240 755,290" fill="#7d3a3c"/><polygon points="685,252 755,296 755,303 685,258" fill="#2c7a35"/>
<ellipse cx="380" cy="266" rx="17" ry="10" fill="#1f5e30"/>
<ellipse cx="385" cy="257" rx="16" ry="18" fill="url(#rb)"/>
<ellipse cx="442" cy="313" rx="10" ry="4" fill="#2c7a35"/><circle cx="457" cy="309" r="10" fill="#f7d11e"/>
<rect x="22" y="30" width="346" height="50" fill="#2c3e50" fill-opacity=".85"/>
<g fill="#ccd" font-size="10"><text x="27" y="46" textLength="185" lengthAdjust="spacingAndGlyphs">Use WASD or Arrow Keys to roll the rainbow ball</text><text x="27" y="57" textLength="330" lengthAdjust="spacingAndGlyphs">Collect all spinning coins, and reach the checkered platform to advance to the next level</text><text x="27" y="69" textLength="200" lengthAdjust="spacingAndGlyphs">Be careful of holes - falling in one will reset the level!</text></g>
<rect x="326" y="28" width="117" height="36" fill="#2c3e50" fill-opacity=".85"/><text x="332" y="52" font-size="17" fill="#eee" textLength="107" lengthAdjust="spacingAndGlyphs">Time: 00:15.085</text>
<rect x="608" y="29" width="140" height="36" fill="#2c3e50" fill-opacity=".85"/><text x="613" y="52" font-size="17" fill="#f1e04a" textLength="130" lengthAdjust="spacingAndGlyphs">Coins Remaining: 5</text>
<rect x="22" y="452" width="63" height="35" fill="#2c3e50" fill-opacity=".8"/><text x="27" y="475" font-size="17" fill="#eee" textLength="52" lengthAdjust="spacingAndGlyphs">Level: 1</text>
<rect x="578" y="461" width="170" height="26" fill="#1d5e32" fill-opacity=".85"/><text x="584" y="477" font-size="11" fill="#dfd" textLength="160" lengthAdjust="spacingAndGlyphs">Created by BookwormKevin and WebSim</text></svg>
<div class="ti">3D Ball Rolling Game - Multiple L...</div><div class="u">https://websim.ai</div>
<svg class="av" viewBox="0 0 20 20"><rect width="20" height="20" fill="#f5f7f7"/><path d="M0 11c5 3 8 4 11 1 4-1 7-2 9-2v10H0z" fill="#2b7cc4"/><path d="M9 13c1-3 0-6 3-8" stroke="#3fa64a" stroke-width="2.500" fill="none"/><circle cx="12" cy="4" r="1.800" fill="#3fa64a"/></svg>
<div class="n">BookwormKevin</div><div class="s"><i>♡</i>46<svg width="9" height="11" viewBox="0 0 9 11"><path fill="#8a8f99" d="M0 5h2v6H0zM3 5l2-5 1 .5V4h3v7H3z"/></svg>2174</div>
</div>
<!-- 6 -->
<div class="card">
<svg class="t" viewBox="799 20 741 475" preserveAspectRatio="none"><rect x="799" y="20" width="741" height="475" fill="#682325"/>
<path d="M1440 170c50 20 90 60 100 110v-90z" fill="#4a181e" filter="url(#b4)"/><rect x="799" y="430" width="741" height="65" fill="#6d2221"/>
<g filter="url(#b4)"><polygon points="799,20 1130,20 1215,120 1045,320 960,385 905,440 799,400" fill="#c0ad72"/>
<polygon points="850,20 895,20 1045,300 1010,325" fill="#a04048"/><polygon points="925,20 985,20 1090,170 1030,240" fill="#a85050"/><polygon points="880,20 908,20 1030,250 1010,270" fill="#d8cc96"/><polygon points="799,30 835,20 985,290 945,340" fill="#9fb088"/><polygon points="799,110 875,300 960,385 940,405 799,240" fill="#6d947e"/><polygon points="799,150 830,190 930,350 915,360 799,200" fill="#c8b47c"/><polygon points="799,240 925,390 905,440 799,335" fill="#2f6a62"/><polygon points="799,340 905,425 885,445 799,400" fill="#a8565a"/><polygon points="1075,20 1130,20 1215,120 1165,90" fill="#c9636b"/><polygon points="1005,20 1060,20 1110,70 1090,85" fill="#dcd6a6"/></g>
<g filter="url(#b4)"><ellipse cx="1285" cy="290" rx="190" ry="182" fill="url(#cat)"/><path d="M1010 325c80-20 130-5 170 20l-30 65c-50 25-130 25-180 20l-60 15-15-35z" fill="#b9a08a"/><path d="M1040 250c40-80 100-110 170-130l30 230c-50 40-130 30-170 0z" fill="#cbb39c"/>
<path d="M905 420l40-22 40-45 50-18 12 35-60 48-60 30z" fill="#94806f"/></g>
<g filter="url(#b2)"><polygon points="985,45 1045,95 1015,135 1000,110" fill="#74604f"/><polygon points="1170,25 1170,125 1110,90" fill="#7a6555"/><ellipse cx="1090" cy="165" rx="78" ry="92" fill="#b29a84"/><ellipse cx="1088" cy="170" rx="42" ry="56" fill="#72635a"/><ellipse cx="1092" cy="232" rx="28" ry="20" fill="#d2c0ac"/></g>
<ellipse cx="1052" cy="165" rx="13" ry="15" fill="#2b2f33"/><ellipse cx="1120" cy="160" rx="13" ry="14" fill="#2b2f33"/><ellipse cx="1092" cy="216" rx="9" ry="6" fill="#a66d6a"/>
<rect x="1076" y="457" width="185" height="23" rx="11" fill="#fff" fill-opacity=".62"/><text x="1136" y="472" font-size="12" fill="#333" textLength="64" lengthAdjust="spacingAndGlyphs">New Cat in 5s</text></svg>
<div class="ti">AI Cat Generator</div><div class="u">https://websim.ai</div>
<svg class="av" viewBox="0 0 20 20"><rect width="20" height="20" fill="#000"/><ellipse cx="10" cy="10" rx="5.500" ry="6" fill="#fff"/></svg>
<div class="n">Creator</div><div class="s"><i>♡</i>24<svg width="9" height="11" viewBox="0 0 9 11"><path fill="#8a8f99" d="M0 5h2v6H0zM3 5l2-5 1 .5V4h3v7H3z"/></svg>2956</div>
</div>
<!-- 7 -->
<div class="card">
<svg class="t" viewBox="14 20 741 475" preserveAspectRatio="none"><rect x="14" y="20" width="741" height="475" fill="#011d3e"/>
<rect x="172" y="20" width="426" height="475" fill="#0a5a88" filter="url(#b2)"/><rect x="180" y="20" width="410" height="475" fill="#003366"/>
<g fill="#011d3e" stroke="#0aa3e0" stroke-width="2.500"><rect x="200" y="22" width="369" height="34" rx="5"/><rect x="200" y="98" width="369" height="35" rx="5"/><rect x="200" y="175" width="369" height="33" rx="5"/><rect x="200" y="250" width="369" height="35" rx="5"/><rect x="200" y="327" width="369" height="34" rx="5"/><rect x="200" y="403" width="369" height="34" rx="5"/><rect x="200" y="479" width="369" height="30" rx="5"/></g>
<g fill="#ccdae8" font-size="12"><text x="211" y="42" textLength="32" lengthAdjust="spacingAndGlyphs">Formal</text><text x="211" y="119" textLength="93" lengthAdjust="spacingAndGlyphs">Short (50-100 words)</text><text x="211" y="348" textLength="32" lengthAdjust="spacingAndGlyphs">Neutral</text><text x="211" y="424" textLength="41" lengthAdjust="spacingAndGlyphs">To Inform</text></g>
<g fill="#7f93a8" font-size="12"><text x="208" y="195" textLength="163" lengthAdjust="spacingAndGlyphs">e.g., children, professionals, students</text><text x="208" y="271" textLength="107" lengthAdjust="spacingAndGlyphs">Enter relevant keywords</text></g>
<g fill="#4fb0e6" font-size="12" font-weight="700"><text x="200" y="79" textLength="74" lengthAdjust="spacingAndGlyphs">Desired Length:</text><text x="200" y="156" textLength="79" lengthAdjust="spacingAndGlyphs">Target Audience:</text><text x="200" y="232" textLength="143" lengthAdjust="spacingAndGlyphs">Keywords (comma-separated):</text><text x="200" y="308" textLength="25" lengthAdjust="spacingAndGlyphs">Tone:</text><text x="200" y="385" textLength="43" lengthAdjust="spacingAndGlyphs">Purpose:</text><text x="200" y="461" textLength="108" lengthAdjust="spacingAndGlyphs">Additional Instructions:</text></g></svg>
<div class="ti">WebSim AI Prompt Generator</div><div class="u">https://websim.ai</div>
<svg class="av" viewBox="0 0 20 20"><rect width="20" height="20" fill="#e7dcc0"/><path d="M3 18c3-6 3-10 8-13l5 3-1 10z" fill="#a89464"/><path d="M0 14h5v6H0z" fill="#3a3020"/><path d="M8 2h6l2 5-6 1z" fill="#cdb57e"/></svg>
<div class="n">redflower40834441</div><div class="s"><i>♡</i>43<svg width="9" height="11" viewBox="0 0 9 11"><path fill="#8a8f99" d="M0 5h2v6H0zM3 5l2-5 1 .5V4h3v7H3z"/></svg>2762</div>
</div>
<!-- 8 -->
<div class="card">
<svg class="t" viewBox="799 20 741 475" preserveAspectRatio="none"><rect x="799" y="20" width="741" height="346" filter="url(#leaf)"/>
<rect x="799" y="365" width="741" height="130" filter="url(#wood)"/><g fill="#6a4a28"><rect x="1300" y="412" width="240" height="2"/><rect x="799" y="457" width="240" height="2"/></g><ellipse cx="1475" cy="466" rx="18" ry="4" fill="#7a4a1e"/>
<path d="M1033 20h272v440q-3 25-15 35h-257z" fill="#919191"/><rect x="1033" y="20" width="272" height="8" fill="#a0a0a0"/>
<rect x="1056" y="26" width="226" height="232" rx="3" fill="#444"/><rect x="1060" y="30" width="218" height="222" fill="#000"/>
<rect x="1299" y="37" width="11" height="29" fill="#a81e1e"/>
<ellipse cx="1082" cy="337" rx="36" ry="45" fill="#555"/><path d="M1070 300h24v26h20v22h-20v26h-24v-26h-20v-22h20z" fill="#2b2b2b"/>
<ellipse cx="1209" cy="315" rx="18" ry="23" fill="#cc0a0a"/><ellipse cx="1265" cy="315" rx="18" ry="23" fill="#cc0a0a"/><text x="1205" y="319" font-size="10" fill="#e8a0a0">B</text><text x="1262" y="319" font-size="10" fill="#f0c0c0">A</text>
<rect x="1116" y="405" width="44" height="19" rx="9" fill="#444"/><rect x="1178" y="405" width="44" height="19" rx="9" fill="#444"/><text x="1126" y="418" font-size="9" fill="#ccc" textLength="24" lengthAdjust="spacingAndGlyphs">Select</text><text x="1190" y="418" font-size="9" fill="#ccc" textLength="20" lengthAdjust="spacingAndGlyphs">Start</text>
<rect x="1236" y="435" width="50" height="5" fill="#333"/>
<rect x="805" y="375" width="247" height="112" rx="3" fill="#1a1a1a" fill-opacity=".72"/>
<g fill="#ddd" font-size="11"><text x="811" y="393" textLength="235" lengthAdjust="spacingAndGlyphs">Click the power switch on the right side to turn the Game Boy</text><text x="811" y="416" textLength="33" lengthAdjust="spacingAndGlyphs">Controls:</text><text x="811" y="428" textLength="71" lengthAdjust="spacingAndGlyphs">D-pad: Arrow keys</text><text x="811" y="441" textLength="32" lengthAdjust="spacingAndGlyphs">A: X key</text><text x="811" y="453" textLength="32" lengthAdjust="spacingAndGlyphs">B: Z key</text><text x="811" y="465" textLength="44" lengthAdjust="spacingAndGlyphs">Start: Enter</text><text x="811" y="477" textLength="46" lengthAdjust="spacingAndGlyphs">Select: Shift</text></g></svg>
<div class="ti">GameBoy Advanced Emulator - P...</div><div class="u">https://playroms.net/</div>
<svg class="av" viewBox="0 0 20 20"><rect width="20" height="20" fill="#475569"/><text x="10" y="14.500" font-size="12" fill="#fff" text-anchor="middle">A</text></svg>
<div class="n">luckymagic90411900</div><div class="s"><i>♡</i>32<svg width="9" height="11" viewBox="0 0 9 11"><path fill="#8a8f99" d="M0 5h2v6H0zM3 5l2-5 1 .5V4h3v7H3z"/></svg>2015</div>
</div>
<!-- 9 -->
<div class="card r3">
<svg class="t" viewBox="14 27 741 254" preserveAspectRatio="none"><rect x="14" y="27" width="741" height="254" fill="#000"/>
<rect x="325" y="27" width="110" height="190" fill="#0f1c24" filter="url(#b7)"/>
<g fill="none" filter="url(#b4)"><path d="M210 140c10-50 40-90 110-110" stroke="#4b3a72" stroke-width="14"/><path d="M545 140c-10-50-40-90-110-110" stroke="#4b3a72" stroke-width="14"/><path d="M215 150c60-20 130 10 160 90" stroke="#454d48" stroke-width="14"/><path d="M545 150c-60-20-130 10-170 90" stroke="#454d48" stroke-width="14"/><path d="M90 215c40-30 60-30 80-20" stroke="#5b3a8a" stroke-width="10"/><path d="M680 225c-30-30-60-35-90-30" stroke="#5b3a8a" stroke-width="10"/><path d="M120 290c10-40 30-60 50-60" stroke="#555" stroke-width="10"/><path d="M660 285c-20-50-50-70-80-70" stroke="#33394a" stroke-width="10"/></g>
<path d="M290 30h50l-30 30z" fill="#143a4e" filter="url(#b4)"/><path d="M425 30h50l-30 30z" fill="#143a4e" filter="url(#b4)"/>
<g filter="url(#b2)" fill-opacity=".6"><ellipse cx="225" cy="225" rx="62" ry="68" fill="#6a5a98" transform="rotate(-15 225 225)"/><ellipse cx="530" cy="225" rx="62" ry="68" fill="#6a5a98" transform="rotate(15 530 225)"/></g>
<g fill="none" stroke-width="4"><ellipse cx="235" cy="232" rx="36" ry="55" stroke="#58b0e8" transform="rotate(-20 235 232)"/><ellipse cx="235" cy="232" rx="22" ry="48" stroke="#c8a8e8" transform="rotate(-20 235 232)"/><ellipse cx="525" cy="232" rx="36" ry="55" stroke="#58b0e8" transform="rotate(20 525 232)"/><ellipse cx="525" cy="232" rx="22" ry="48" stroke="#c8a8e8" transform="rotate(20 525 232)"/></g>
<g fill="none" stroke="#d9c3ec" stroke-width="7" stroke-dasharray="9 8"><circle cx="222" cy="212" r="52"/><circle cx="530" cy="210" r="52"/></g>
<g fill="#e8dcee"><circle cx="208" cy="158" r="10"/><circle cx="165" cy="198" r="10"/><circle cx="302" cy="186" r="10"/><circle cx="185" cy="172" r="9"/><circle cx="236" cy="180" r="9"/><circle cx="548" cy="158" r="10"/><circle cx="456" cy="186" r="10"/><circle cx="592" cy="198" r="9"/><circle cx="578" cy="170" r="9"/><circle cx="520" cy="180" r="9"/></g>
<g fill="#ea40e0"><circle cx="186" cy="200" r="6"/><circle cx="272" cy="260" r="8"/><circle cx="490" cy="192" r="6"/><circle cx="498" cy="260" r="8"/><circle cx="570" cy="265" r="5"/></g>
<g fill="#28d8ff"><circle cx="193" cy="267" r="5"/><circle cx="296" cy="196" r="3"/></g>
<g fill="#cfd8bf" filter="url(#b2)"><circle cx="375" cy="250" r="26"/><circle cx="345" cy="245" r="8"/><circle cx="405" cy="245" r="8"/></g><g fill="#3c423a"><circle cx="372" cy="246" r="5"/><circle cx="384" cy="258" r="4"/><circle cx="360" cy="262" r="4"/></g>
<g fill="none" stroke="#12c8d8" stroke-width="4"><path d="M378 136c-14 2-22 18-20 32"/><path d="M382 136c14 2 24 18 28 32"/><path d="M378 168v-28"/><path d="M400 168v-22"/></g></svg>
</div>
<!-- 10 -->
<div class="card r3">
<svg class="t" viewBox="799 27 741 254" preserveAspectRatio="none"><rect x="799" y="27" width="741" height="254" fill="#f3f3f3"/>
<g fill="#e8a010"><rect x="962" y="103" width="15" height="15" rx="2"/><rect x="1358" y="103" width="15" height="15" rx="2"/></g><g fill="none" stroke="#b0b0b0" stroke-width="2.500"><path d="M965 103v-4a4.500 4.500 0 0 1 9 0v4"/><path d="M1361 103v-4a4.500 4.500 0 0 1 9 0v4"/></g>
<text x="983" y="117" font-size="34" font-weight="700" fill="#3498db" textLength="370" lengthAdjust="spacingAndGlyphs">PASSWORD FORTRESS</text>
<g fill="#444" font-size="12"><text x="921" y="177" textLength="430" lengthAdjust="spacingAndGlyphs">Our cutting-edge algorithm analyzes your password using multiple advanced metrics to give you a</text><text x="921" y="197" textLength="197" lengthAdjust="spacingAndGlyphs">comprehensive understanding of its strength.</text></g>
<rect x="922" y="215" width="494" height="39" fill="#fff" stroke="#8cc4ea" stroke-width="2.500"/><text x="933" y="239" font-size="12" fill="#666" textLength="91" lengthAdjust="spacingAndGlyphs">Enter your password</text>
<rect x="922" y="267" width="494" height="9" rx="2" fill="#e0e0e0"/><rect x="922" y="267" width="124" height="9" rx="2" fill="#e74c3c"/></svg>
</div>
<!-- 11 -->
<div class="card r3">
<svg class="t" viewBox="9 27 506 254" preserveAspectRatio="none"><rect x="9" y="27" width="506" height="254" fill="#00004f"/><rect x="505" y="27" width="10" height="254" fill="#c8c8cc"/>
<g><rect x="25" y="50" width="20" height="24" fill="#8fa0b0"/><rect x="22" y="74" width="26" height="8" fill="#c8d0d8"/>
<ellipse cx="77" cy="65" rx="11" ry="19" fill="#f0a040"/><circle cx="74" cy="55" r="3" fill="#e03030"/><circle cx="80" cy="68" r="3" fill="#3090e0"/><ellipse cx="119" cy="65" rx="11" ry="19" fill="#f0a040"/><circle cx="116" cy="55" r="3" fill="#e03030"/><circle cx="122" cy="68" r="3" fill="#3090e0"/>
<path d="M28 130h16v30h-3v-24h-10v30h-5z" fill="#909098"/><ellipse cx="28" cy="163" rx="5" ry="4" fill="#909098"/>
<rect x="66" y="137" width="24" height="20" fill="#dfe4ea"/><rect x="69" y="146" width="18" height="3" fill="#556"/>
<ellipse cx="119" cy="150" rx="11" ry="23" fill="#eee"/><circle cx="119" cy="142" r="3" fill="#c33"/>
<rect x="25" y="222" width="22" height="24" rx="2" fill="#7a8a9a"/><rect x="34" y="212" width="3" height="10" fill="#ccc"/><circle cx="30" cy="233" r="3" fill="#e33"/><circle cx="42" cy="233" r="3" fill="#e33"/>
<rect x="70" y="212" width="13" height="36" fill="#f4e0a8"/><path d="M115 212c8 3 8 10 0 14 6 3 10 8 5 20l-8-4c3-5 0-10-2-12 4-6 2-12 5-18z" fill="#2e9a3a"/></g>
<g fill="#ccd" font-size="11"><text x="26" y="97" textLength="18" lengthAdjust="spacingAndGlyphs">System</text><text x="62" y="97" textLength="30" lengthAdjust="spacingAndGlyphs">XPS Explorer</text><text x="111" y="97" textLength="16" lengthAdjust="spacingAndGlyphs">AI Art</text><text x="26" y="180" textLength="18" lengthAdjust="spacingAndGlyphs">Audio</text><text x="64" y="180" textLength="28" lengthAdjust="spacingAndGlyphs">Ultimate Web</text><text x="110" y="180" textLength="18" lengthAdjust="spacingAndGlyphs">Dice</text><text x="24" y="264" textLength="22" lengthAdjust="spacingAndGlyphs">AI Friend</text><text x="64" y="264" textLength="26" lengthAdjust="spacingAndGlyphs">Readme.txt</text><text x="106" y="264" textLength="24" lengthAdjust="spacingAndGlyphs">AI Dragon</text></g>
<rect x="133" y="114" width="254" height="170" fill="#14142a" stroke="#0a6ab0"/><rect x="133" y="114" width="254" height="21" fill="#00bfff"/><text x="137" y="128" font-size="10" fill="#fff" textLength="20" lengthAdjust="spacingAndGlyphs">system</text><text x="136" y="150" font-size="11" fill="#111" textLength="52" lengthAdjust="spacingAndGlyphs">Booting up OS...</text></svg>
</div>
<!-- 12 -->
<div class="card r3">
<svg class="t" viewBox="547 27 506 254" preserveAspectRatio="none"><rect x="547" y="27" width="506" height="254" fill="#0a0a0a"/>
<text x="658" y="124" font-size="30" font-weight="700" fill="#ffd84a" textLength="284" lengthAdjust="spacingAndGlyphs">Midjourney AI Image Generator</text>
<rect x="716" y="153" width="168" height="31" fill="#333"/><text x="721" y="172" font-size="11" fill="#777" textLength="80" lengthAdjust="spacingAndGlyphs">Enter your creative prompt</text>
<rect x="716" y="191" width="168" height="34" fill="#ff5a5f"/><rect x="716" y="191" width="168" height="2" fill="#601c20"/><text x="780" y="212" font-size="11" fill="#ffb0b0" textLength="38" lengthAdjust="spacingAndGlyphs">GENERATE</text>
<g fill="#cfcfcf"><rect x="663" y="267" width="64" height="16" rx="2"/><rect x="733" y="267" width="64" height="16" rx="2"/><rect x="803" y="267" width="64" height="16" rx="2"/><rect x="874" y="267" width="63" height="16" rx="2"/></g></svg>
</div>
</div>
<svg id="logo" viewBox="0 0 98 32"><g font-family="'Liberation Sans',sans-serif" font-weight="700" font-size="25" stroke-linejoin="round"><text x="1" y="25" fill="#3f7fe8" stroke="#3f7fe8" stroke-width=".6" transform="rotate(-4 10 20)">w</text><text x="22" y="20" fill="#e8352d" stroke="#e8352d" stroke-width=".6">e</text><text x="38" y="25" fill="#fbbc05" stroke="#fbbc05" stroke-width=".6">b</text><text x="54" y="19" fill="#3f7fe8" stroke="#3f7fe8" stroke-width=".6">s</text><text x="67" y="26" fill="#34a853" stroke="#34a853" stroke-width=".6">i</text><text x="75" y="20" fill="#e8352d" stroke="#e8352d" stroke-width=".6">m</text></g></svg>
</div>
</body></html>
